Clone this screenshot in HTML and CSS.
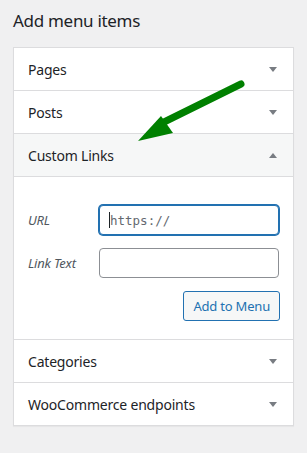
FILE: index.html
```html
<!DOCTYPE html>
<html>
<head>
<meta charset="utf-8">
<link rel="stylesheet" href="styles.css">
</head>
<body>
<div class="page">
  <h2 class="title">Add menu items</h2>
  <div class="panel">
    <div class="row"><span>Pages</span><svg class="tri" width="8" height="5" viewBox="0 0 8 5"><polygon points="0,0 8,0 4,5"/></svg></div>
    <div class="row"><span>Posts</span><svg class="tri" width="8" height="5" viewBox="0 0 8 5"><polygon points="0,0 8,0 4,5"/></svg></div>
    <div class="row open"><span>Custom Links</span><svg class="tri" width="8" height="5" viewBox="0 0 8 5"><polygon points="0,5 8,5 4,0"/></svg></div>
    <div class="content">
      <div class="field">
        <label class="lbl">URL</label>
        <div class="input focus"><span class="caret"></span>https://</div>
      </div>
      <div class="field">
        <label class="lbl">Link Text</label>
        <div class="input"></div>
      </div>
      <div class="actions"><button class="btn">Add to Menu</button></div>
    </div>
    <div class="row"><span>Categories</span><svg class="tri" width="8" height="5" viewBox="0 0 8 5"><polygon points="0,0 8,0 4,5"/></svg></div>
    <div class="row last"><span>WooCommerce endpoints</span><svg class="tri" width="8" height="5" viewBox="0 0 8 5"><polygon points="0,0 8,0 4,5"/></svg></div>
  </div>
</div>
<svg class="arrow" width="307" height="453" viewBox="0 0 307 453">
  <line x1="241" y1="84" x2="160" y2="124" stroke="#008000" stroke-width="7" stroke-linecap="round"/>
  <polygon points="138,141 161,116 173,133" fill="#008000"/>
</svg>
</body>
</html>
```
FILE: styles.css
```css
html, body {
  margin: 0;
  padding: 0;
  background: #f0f0f1;
  width: 307px;
  height: 453px;
  overflow: hidden;
  position: relative;
  font-family: "Noto Sans", "Open Sans", sans-serif;
  color: #1d2327;
}
.page {
  padding: 0 13px 0 13px;
}
.title {
  margin: 0;
  padding-top: 9px;
  height: 38px;
  font-size: 17px;
  font-weight: 400;
  line-height: 24px;
  letter-spacing: -0.3px;
}
.panel {
  width: 279px;
  background: #fff;
  border: 1px solid #dcdcde;
  box-shadow: 0 1px 1px rgba(0,0,0,0.04);
}
.row {
  box-sizing: border-box;
  display: flex;
  align-items: center;
  justify-content: space-between;
  padding: 0 16px 0 14px;
  font-size: 14px;
  letter-spacing: -0.2px;
  border-bottom: 1px solid #dcdcde;
  height: 43px;
}
.row.last { border-bottom: none; height: 42px; }
.row.open { background: #f6f7f7; }
.tri { fill: #787c82; display: block; }
.content {
  border-bottom: 1px solid #dcdcde;
  height: 163px;
  box-sizing: border-box;
  padding: 28px 14px 0 14px;
  display: flex;
  flex-direction: column;
  gap: 13px;
}
.field {
  display: grid;
  grid-template-columns: 71px 180px;
  align-items: center;
}
.lbl {
  font-style: italic;
  font-size: 13px;
  color: #50575e;
  letter-spacing: -0.2px;
}
.input {
  height: 30px;
  box-sizing: border-box;
  border: 1px solid #8c8f94;
  border-radius: 4px;
  background: #fff;
  display: flex;
  align-items: center;
  padding-left: 9px;
  font-family: "DejaVu Sans Mono", "Liberation Mono", monospace;
  font-size: 12.5px;
  color: #646970;
}
.input.focus {
  border-color: #2271b1;
  box-shadow: 0 0 0 1px #2271b1;
}
.caret {
  display: inline-block;
  width: 1px;
  height: 16px;
  background: #1d2327;
}
.actions {
  display: flex;
  justify-content: flex-end;
}
.btn {
  height: 30px;
  box-sizing: border-box;
  padding: 0 9px;
  border: 1px solid #2271b1;
  border-radius: 3px;
  background: #f6f7f7;
  color: #2271b1;
  font-family: "Noto Sans", "Open Sans", sans-serif;
  font-size: 13px;
  letter-spacing: -0.2px;
  margin-right: -1px;
}
.arrow {
  position: absolute;
  left: 0;
  top: 0;
  pointer-events: none;
}
```
